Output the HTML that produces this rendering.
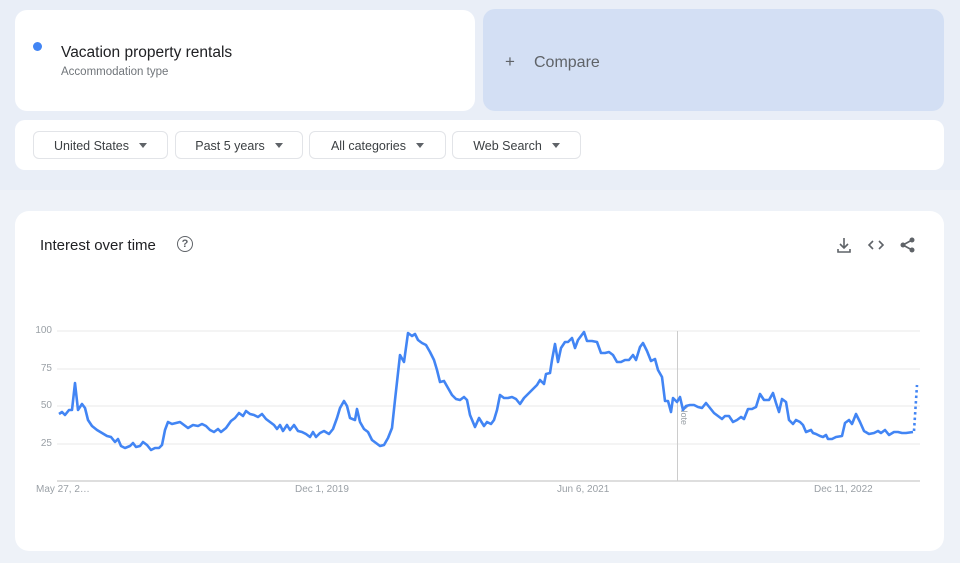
<!DOCTYPE html>
<html><head><style>
body{margin:0;width:960px;height:563px;background:#eef2f8;font-family:"Liberation Sans",Arial,sans-serif;position:relative;overflow:hidden}
.top{position:absolute;left:0;top:0;width:960px;height:190px;background:#e9eef7}
.card{position:absolute;background:#fff;border-radius:12px}
.sel{position:absolute;top:131px;height:28px;border:1px solid #e2e4e8;border-radius:6px;font-size:12.5px;color:#3c4043;line-height:28px;box-sizing:border-box;text-align:center}
.sel:after{content:"";display:inline-block;margin-left:10px;border-left:4.5px solid transparent;border-right:4.5px solid transparent;border-top:5px solid #5f6368;vertical-align:2px}
.yl{position:absolute;left:20px;width:32px;text-align:right;font-size:10px;color:#9aa0a6}
.xl{position:absolute;top:484px;font-size:10px;color:#9aa0a6}
</style></head><body>
<div class="top"></div>
<div class="card" style="left:15px;top:10px;width:460px;height:101px"></div>
<div style="position:absolute;left:33px;top:42px;width:9px;height:9px;border-radius:50%;background:#4285f4"></div>
<div style="position:absolute;left:61px;top:44px;font-size:15.5px;color:#202124">Vacation property rentals</div>
<div style="position:absolute;left:61px;top:66px;font-size:11.5px;color:#70757a">Accommodation type</div>
<div style="position:absolute;left:483px;top:9px;width:461px;height:102px;border-radius:12px;background:#d3dff4"></div>
<div style="position:absolute;left:505px;top:52px;font-size:17px;color:#5f6368">+</div>
<div style="position:absolute;left:534px;top:54px;font-size:16px;color:#5f6368">Compare</div>
<div class="card" style="left:15px;top:120px;width:929px;height:50px;border-radius:10px"></div>
<div class="sel" style="left:33px;width:135px">United States</div>
<div class="sel" style="left:175px;width:128px">Past 5 years</div>
<div class="sel" style="left:309px;width:137px">All categories</div>
<div class="sel" style="left:452px;width:129px">Web Search</div>
<div class="card" style="left:15px;top:211px;width:929px;height:340px;border-radius:14px"></div>
<div style="position:absolute;left:40px;top:237px;font-size:15px;color:#202124">Interest over time</div>
<div style="position:absolute;left:177px;top:236px;width:14px;height:14px;border:1.5px solid #5f6368;border-radius:50%;font-size:11px;color:#5f6368;text-align:center;line-height:14px;font-weight:bold">?</div>
<svg style="position:absolute;left:0;top:0" width="960" height="563">
<g stroke="#5f6368" stroke-width="1.6" fill="none">
<path d="M844 238v10M840 244l4 4 4-4M838 249v3h12v-3"/>
<path d="M873 241l-4 4 4 4M879 241l4 4-4 4"/>
<path d="M903 245l9-5M903 245l9 5"/>
</g>
<g fill="#5f6368"><circle cx="903" cy="245" r="2.5"/><circle cx="912" cy="240" r="2.5"/><circle cx="912" cy="250" r="2.5"/></g>
<g stroke="#eaeaea" stroke-width="1"><line x1="57" y1="331" x2="920" y2="331"/><line x1="57" y1="369" x2="920" y2="369"/><line x1="57" y1="406" x2="920" y2="406"/><line x1="57" y1="444" x2="920" y2="444"/></g>
<line x1="57" y1="481" x2="920" y2="481" stroke="#bdbdbd"/>
<line x1="677.5" y1="331" x2="677.5" y2="481" stroke="#ccc"/>
<text x="681" y="406" font-size="9" fill="#9aa0a6" transform="rotate(90 681 406)" font-family="Liberation Sans">Note</text>
<polyline fill="none" stroke="#4285f4" stroke-width="2.6" stroke-linejoin="round" points="59,414 62,412 65,415 69,410 72,410 75,383 78,410 82,404 85,408 88,420 92,426 97,430 102,433 107,436 111,437 115,442 118,439 121,446 125,448 130,446 133,443 136,447 140,446 143,442 147,445 151,450 155,448 159,448 162,445 165,430 168,422 172,424 176,423 180,422 184,425 188,428 193,425 198,426 202,424 206,426 210,430 214,432 218,429 221,432 226,428 231,421 235,418 239,413 243,416 246,411 250,414 254,415 258,417 262,414 266,419 270,422 274,425 277,429 280,425 283,431 287,425 290,430 294,425 298,431 302,432 306,434 310,437 313,432 316,437 320,433 324,431 329,434 333,429 337,418 340,408 344,401 347,406 350,418 355,420 357,409 360,422 364,429 368,432 372,440 376,443 380,446 384,445 388,438 392,428 395,400 400,355 404,362 408,333 412,336 415,334 418,340 422,343 426,345 430,352 434,360 437,370 440,382 444,381 448,388 452,395 456,399 460,400 464,397 467,400 470,415 475,427 479,418 484,426 487,422 491,424 494,420 497,410 500,395 504,398 508,398 512,397 516,399 520,404 524,398 528,394 532,390 537,385 540,380 544,384 546,374 550,373 552,360 555,344 558,362 561,348 565,342 568,342 572,338 575,348 578,340 584,332 587,341 592,341 597,342 601,353 605,353 609,352 613,355 617,362 621,362 625,360 629,360 633,355 636,360 640,347 643,343 647,351 651,361 655,359 658,370 662,377 665,401 668,401 671,412 673,398 677,402 680,397 683,410 686,406 690,405 694,405 698,407 702,408 706,403 710,408 714,413 718,416 722,419 725,416 729,416 733,422 737,420 741,417 744,419 748,409 752,409 756,407 760,394 764,400 769,400 773,393 776,403 779,412 782,399 786,402 789,420 793,424 796,420 800,422 803,425 806,432 811,430 813,433 816,434 820,436 823,437 826,435 828,439 832,439 836,437 842,436 845,423 849,420 852,424 856,414 860,422 864,431 869,434 874,433 878,431 881,433 885,430 889,435 894,432 898,432 902,433 906,433 913,432"/>
<line x1="914" y1="431" x2="917" y2="385" stroke="#4285f4" stroke-width="2.6" stroke-dasharray="2.5 3"/>
</svg>
<div class="yl" style="top:325px">100</div>
<div class="yl" style="top:363px">75</div>
<div class="yl" style="top:400px">50</div>
<div class="yl" style="top:438px">25</div>
<div class="xl" style="left:36px">May 27, 2…</div>
<div class="xl" style="left:295px">Dec 1, 2019</div>
<div class="xl" style="left:557px">Jun 6, 2021</div>
<div class="xl" style="left:814px">Dec 11, 2022</div>
</body></html>
